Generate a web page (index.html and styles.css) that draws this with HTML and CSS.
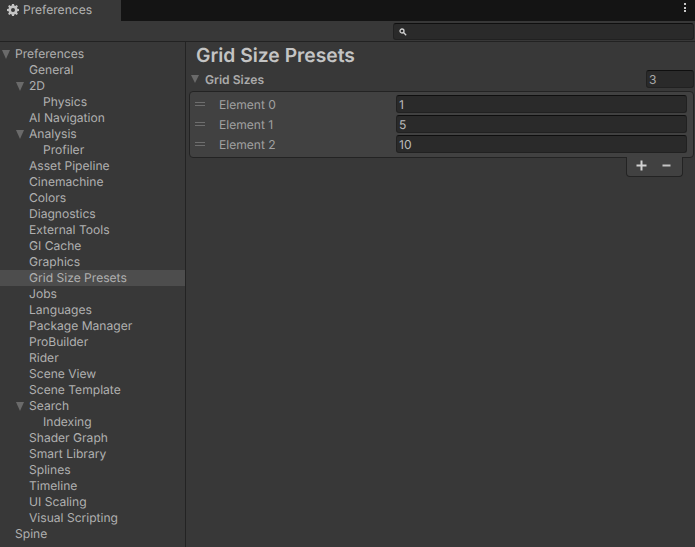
FILE: index.html
```html
<!DOCTYPE html>
<html lang="en">
<head>
<meta charset="utf-8">
<title>Preferences</title>
<link rel="stylesheet" href="styles.css">
</head>
<body>
<div class="window">
  <header class="tabbar">
    <div class="tab">
      <svg class="gear" viewBox="0 0 12 12" width="12" height="12"><path fill="#c4c4c4" fill-rule="evenodd" d="M5 0h2l.3 1.6 1 .4L9.700 1.100l1.200 1.200L10 3.700l.4 1L12 5v2l-1.600.3-.4 1 .9 1.400-1.200 1.200L8.300 10l-1 .4L7 12H5l-.3-1.600-1-.4-1.400.9-1.200-1.200L2 8.300l-.4-1L0 7V5l1.600-.3.4-1-.9-1.400 1.200-1.200L3.700 2l1-.4zM6 4a2 2 0 1 0 0 4 2 2 0 0 0 0-4z"/></svg>
      <span>Preferences</span>
    </div>
    <div class="kebab"><i></i><i></i><i></i></div>
  </header>
  <div class="toolbar">
    <div class="search">
      <svg viewBox="0 0 8 8" width="8" height="8"><circle cx="3" cy="3" r="2" fill="none" stroke="#d0d0d0" stroke-width="1.300"/><path d="M4.500 4.500 7.200 7.200" stroke="#d0d0d0" stroke-width="1.300"/></svg>
    </div>
  </div>
  <main class="body">
    <nav class="tree">
      <div class="row lvl0 open">Preferences</div>
      <div class="row lvl1">General</div>
      <div class="row lvl1 open">2D</div>
      <div class="row lvl2">Physics</div>
      <div class="row lvl1">AI Navigation</div>
      <div class="row lvl1 open">Analysis</div>
      <div class="row lvl2">Profiler</div>
      <div class="row lvl1">Asset Pipeline</div>
      <div class="row lvl1">Cinemachine</div>
      <div class="row lvl1">Colors</div>
      <div class="row lvl1">Diagnostics</div>
      <div class="row lvl1">External Tools</div>
      <div class="row lvl1">GI Cache</div>
      <div class="row lvl1">Graphics</div>
      <div class="row lvl1 selected">Grid Size Presets</div>
      <div class="row lvl1">Jobs</div>
      <div class="row lvl1">Languages</div>
      <div class="row lvl1">Package Manager</div>
      <div class="row lvl1">ProBuilder</div>
      <div class="row lvl1">Rider</div>
      <div class="row lvl1">Scene View</div>
      <div class="row lvl1">Scene Template</div>
      <div class="row lvl1 open">Search</div>
      <div class="row lvl2">Indexing</div>
      <div class="row lvl1">Shader Graph</div>
      <div class="row lvl1">Smart Library</div>
      <div class="row lvl1">Splines</div>
      <div class="row lvl1">Timeline</div>
      <div class="row lvl1">UI Scaling</div>
      <div class="row lvl1">Visual Scripting</div>
      <div class="row lvl0">Spine</div>
    </nav>
    <section class="content">
      <h1>Grid Size Presets</h1>
      <div class="foldout">
        <span class="arrow"></span>
        <span class="foldout-label">Grid Sizes</span>
        <div class="field size-field">3</div>
      </div>
      <div class="list">
        <div class="item"><span class="handle"></span><span class="item-label">Element 0</span><div class="field item-field">1</div></div>
        <div class="item"><span class="handle"></span><span class="item-label">Element 1</span><div class="field item-field">5</div></div>
        <div class="item"><span class="handle"></span><span class="item-label">Element 2</span><div class="field item-field">10</div></div>
      </div>
      <div class="list-footer">
        <svg viewBox="0 0 11 11" width="11" height="11"><path d="M5.500 0.500v10M0.500 5.500h10" stroke="#d2d2d2" stroke-width="2"/></svg>
        <svg viewBox="0 0 9 3" width="9" height="3"><path d="M0.500 1.500h8" stroke="#c4c4c4" stroke-width="2"/></svg>
      </div>
    </section>
  </main>
</div>
</body>
</html>
```
FILE: styles.css
```css
* { box-sizing: border-box; }
html, body { margin: 0; height: 100%; background: #383838; overflow: hidden; }
body { font-family: Inter, "Liberation Sans", sans-serif; font-size: 12.08px; color: #b0b0b0; text-rendering: geometricPrecision; }
.window { width: 695px; height: 547px; display: flex; flex-direction: column; }

.tabbar { height: 21px; background: #141414; display: flex; justify-content: space-between; flex: none; }
.tab { width: 121px; background: #383838; display: flex; align-items: center; gap: 4px; padding: 0 0 2px 7px; color: #b4b4b4; }
.gear { display: block; }
.kebab { width: 3px; margin: 3px 8px 0 0; display: flex; flex-direction: column; gap: 1.500px; }
.kebab i { display: block; width: 2px; height: 2px; background: #c8c8c8; }

.toolbar { height: 21px; flex: none; border-bottom: 1px solid #222; display: flex; justify-content: flex-end; padding: 2px 1px 0 0; }
.search { width: 301px; height: 17px; background: #2a2a2a; border: 1px solid #212121; border-top-color: #0f0f0f; border-radius: 3px; display: flex; align-items: center; padding-left: 5px; }
.search svg { display: block; }

.body { flex: 1; display: flex; min-height: 0; }
.tree { width: 186px; flex: none; border-right: 1px solid #232323; padding-top: 4px; }
.row { height: 16px; line-height: 15px; white-space: nowrap; position: relative; }
.lvl0 { padding-left: 15px; }
.lvl1 { padding-left: 29px; }
.lvl2 { padding-left: 43px; }
.selected { background: #4d4d4d; }
.open::before { content: ""; position: absolute; top: 4px; border-left: 4.500px solid transparent; border-right: 4.500px solid transparent; border-top: 9px solid #6a6a6a; }
.lvl0.open::before { left: 2px; }
.lvl1.open::before { left: 16px; }

.content { flex: 1; min-width: 0; padding: 0 1px 0 4px; }
h1 { margin: 0; font-size: 19.3px; line-height: 26px; font-weight: 600; color: #c4c4c4; padding: 0 0 0 6px; height: 28px; }
.foldout { height: 18px; display: flex; align-items: center; padding-left: 1px; }
.arrow { width: 0; height: 0; border-left: 4.500px solid transparent; border-right: 4.500px solid transparent; border-top: 8px solid #6a6a6a; margin: 0 6px 0 0; }
.foldout-label { font-weight: 600; color: #aaaaaa; flex: 1; padding-top: 1px; }
.field { background: #2a2a2a; border: 1px solid #212121; border-top-color: #0f0f0f; border-radius: 3px; color: #bcbcbc; padding-left: 2px; line-height: 17px; }
.size-field { width: 48px; height: 18px; color: #a8a8a8; }

.list { margin: 3px 0 0 -1px; height: 67px; background: #414141; border: 1px solid #232323; border-radius: 4px; padding: 3px 6px 0 5px; display: flex; flex-direction: column; gap: 2px; }
.item { height: 18px; display: flex; align-items: center; flex: none; }
.handle { width: 10px; height: 4px; border-top: 1px solid #6e6e6e; border-bottom: 1px solid #6e6e6e; flex: none; }
.item-label { width: 191px; padding: 1px 0 0 14px; flex: none; color: #a0a0a0; }
.item-field { flex: 1; height: 18px; }

.list-footer { width: 57px; height: 20px; margin: -1px 0 0 436px; background: #414141; border: 1px solid #232323; border-top: 0; border-radius: 0 0 4px 4px; display: flex; align-items: center; gap: 15px; padding: 0 0 2px 9px; }
.list-footer svg { display: block; }
```
